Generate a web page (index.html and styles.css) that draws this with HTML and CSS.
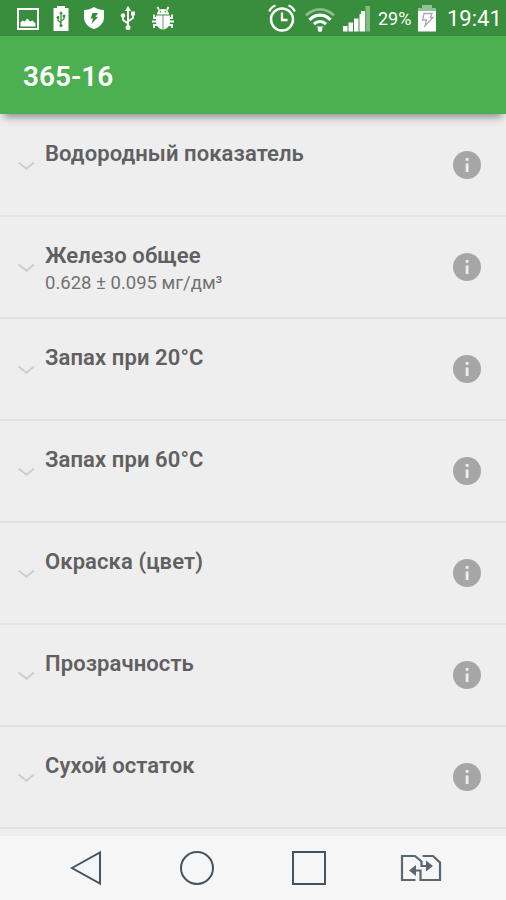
FILE: index.html
```html
<!DOCTYPE html>
<html lang="ru">
<head>
<meta charset="utf-8">
<title>365-16</title>
<link rel="stylesheet" href="styles.css">
</head>
<body>
<svg class="defs" aria-hidden="true">
  <symbol id="chevron" viewBox="0 0 18 10"><path d="M1.500 1.500 9.500 7.800 17 1.500" fill="none" stroke="#cccccc" stroke-width="1.800"/></symbol>
  <symbol id="info" viewBox="0 0 28 28"><circle cx="14" cy="14" r="14" fill="#a6a6a6"/><path d="M12.700 7h2.800v2.800h-2.800zM12.700 12.500h2.800v8.600h-2.800z" fill="#eee"/></symbol>
</svg>
<div class="screen">
  <div class="status">
    <div class="status-left">
      <svg width="24" height="24" viewBox="0 0 24 24"><path d="M2 3h20v20H2z" fill="none" stroke="#fff" stroke-width="2"/><path d="M4.500 20.500v-4l2-2 2 1 3-3 2.500 3 2.500-1 3 3v3z" fill="#fff"/></svg>
      <svg width="16" height="26" viewBox="0 0 16 26"><path d="M4 1h8v2h3.500v23H.5V3H4z" fill="#fff"/><path d="M8 21V8M8 18l-3-2.500v-3M8 16l3-2v-3" fill="none" stroke="#388e3c" stroke-width="1.300"/><path d="M8 6l1.800 3H6.200zM9.700 9.800h2.600v2.400H9.700z" fill="#388e3c"/><circle cx="5" cy="12.500" r="1.400" fill="#388e3c"/><circle cx="8" cy="20.500" r="1.600" fill="#388e3c"/></svg>
      <svg width="22" height="24" viewBox="0 0 22 24"><path d="M11 1C8 3 4.500 4 1 4v7c0 6 4 10 10 12 6-2 10-6 10-12V4c-3.500 0-7-1-10-3z" fill="#fff"/><path d="M9.500 7h5.500l-2.500 4h2.500l-6.500 7 1.500-5.500H7.500z" fill="#388e3c"/></svg>
      <svg width="16" height="26" viewBox="0 0 16 26"><path d="M8 22V4M8 18.500l-5-3.500v-4M8 16.500l5-3.500V9" fill="none" stroke="#fff" stroke-width="1.800"/><path d="M8 1l3 5H5zM11 6.500h4v4h-4z" fill="#fff"/><circle cx="3" cy="10.500" r="2.200" fill="#fff"/><circle cx="8" cy="22.500" r="2.500" fill="#fff"/></svg>
      <svg width="24" height="26" viewBox="0 0 24 26"><path d="M6 9.500c0-7.500 12-7.500 12 0z" fill="#fff"/><path d="M8 5 6.500 2M16 5l1.500-3M6 13H3V9.500M18 13h3V9.500M6 16.500H1M18 16.500h5M6 20H3v3M18 20h3v3" fill="none" stroke="#fff" stroke-width="1.800"/><path d="M5 10.500h6.600v14C7.500 24 5 20.500 5 16.500zM12.400 10.500H19v6c0 4-2.500 7.500-6.600 8z" fill="#fff"/><circle cx="9.500" cy="6.800" r=".8" fill="#388e3c"/><circle cx="14.500" cy="6.800" r=".8" fill="#388e3c"/></svg>
    </div>
    <div class="status-right">
      <svg class="alarm" width="28" height="28" viewBox="0 0 28 28"><circle cx="14" cy="15.500" r="11" fill="none" stroke="#fff" stroke-width="2.500"/><path d="M14 8.500v7.500h5.500M1.200 7.500C2.500 4.500 4.500 2.500 7.500 1.500M26.800 7.500C25.500 4.500 23.500 2.500 20.500 1.500" fill="none" stroke="#fff" stroke-width="2.300"/></svg>
      <svg class="wifi" width="30" height="26" viewBox="0 0 30 26"><path d="M1 8.500C9 .3 21 .3 29 8.500" fill="none" stroke="#8cbf8f" stroke-width="2.800"/><path d="M4.500 12.800c6-6.300 15-6.300 21 0M9 17.200c3.500-3.600 8.500-3.600 12 0" fill="none" stroke="#fff" stroke-width="3.200"/><path d="M11.500 19.500h7L15 23z" fill="#fff"/><circle cx="15" cy="22.500" r="2.400" fill="#fff"/></svg>
      <svg class="signal" width="28" height="27" viewBox="0 0 28 27"><path d="M0 21h4.500v5.500H0zM5.500 17.500H10v9H5.500zM11 13.500h4.500v13H11zM16.500 9H21v17.500h-4.500z" fill="#fff"/><path d="M18 6h4v20.500h-1V9h-3z" fill="#fff"/><path d="M22.500 1H27v25.500h-4.500z" fill="#83b985"/></svg>
      <span class="percent">29%</span>
      <svg class="battery" width="18" height="28" viewBox="0 0 18 28"><path d="M4 1h10v3h4v6H0V4h4z" fill="#91c294"/><path d="M0 7h18v20.500H0z" fill="#fff"/><path d="M6 9.500h8l-1.500 4h2.500l-8 8.500 1.500-6H4.500z" fill="none" stroke="#aaa" stroke-width="1.300"/></svg>
      <span class="clock">19:41</span>
    </div>
  </div>
  <header class="appbar"><h1>365-16</h1></header>
  <main class="list">
    <div class="row"><svg class="chevron"><use href="#chevron"/></svg><div class="text"><h2>Водородный показатель</h2></div><svg class="info"><use href="#info"/></svg></div>
    <div class="row"><svg class="chevron"><use href="#chevron"/></svg><div class="text"><h2>Железо общее</h2><p>0.628 ± 0.095 мг/дм³</p></div><svg class="info"><use href="#info"/></svg></div>
    <div class="row"><svg class="chevron"><use href="#chevron"/></svg><div class="text"><h2>Запах при 20°C</h2></div><svg class="info"><use href="#info"/></svg></div>
    <div class="row"><svg class="chevron"><use href="#chevron"/></svg><div class="text"><h2>Запах при 60°C</h2></div><svg class="info"><use href="#info"/></svg></div>
    <div class="row"><svg class="chevron"><use href="#chevron"/></svg><div class="text"><h2>Окраска (цвет)</h2></div><svg class="info"><use href="#info"/></svg></div>
    <div class="row"><svg class="chevron"><use href="#chevron"/></svg><div class="text"><h2>Прозрачность</h2></div><svg class="info"><use href="#info"/></svg></div>
    <div class="row"><svg class="chevron"><use href="#chevron"/></svg><div class="text"><h2>Сухой остаток</h2></div><svg class="info"><use href="#info"/></svg></div>
  </main>
  <nav class="navbar">
    <svg width="34" height="36" viewBox="0 0 34 36"><path d="M3 18 31 2.500v31z" fill="none" stroke="#46545e" stroke-width="2"/></svg>
    <svg width="36" height="36" viewBox="0 0 36 36"><circle cx="18" cy="18" r="16" fill="none" stroke="#46545e" stroke-width="2"/></svg>
    <svg width="36" height="36" viewBox="0 0 36 36"><path d="M2 2h32v32H2z" fill="none" stroke="#46545e" stroke-width="2"/></svg>
    <svg width="42" height="28" viewBox="0 0 42 28"><g fill="none" stroke="#5b666e" stroke-width="2.200"><path d="M15.500 26H2V2h13l6.500 5.500V12h8M22.500 2H33l7 6.500V26H20.500v-9.500h-8"/></g><path d="M26 6.500l7 5.500-7 5.500zM16 11l-7 5.500 7 5.500z" fill="#5b666e"/></svg>
  </nav>
</div>
</body>
</html>
```
FILE: styles.css
```css
* { box-sizing: border-box; }
body { margin: 0; font-family: Roboto, "Noto Sans", sans-serif; background: #eee; }
h1, h2, p { margin: 0; }
svg { display: block; flex: none; }
.defs { display: none; }
.screen { width: 506px; height: 900px; display: flex; flex-direction: column; overflow: hidden; }

.status { height: 36px; flex: none; background: #388e3c; color: #fff; display: flex; justify-content: space-between; padding: 0 4px 0 16px; }
.status-left, .status-right { display: flex; align-items: center; }
.status-left { gap: 12px; padding-bottom: 1px; }
.status-left svg:nth-child(2) { margin-left: 1px; }
.status-left svg:nth-child(3) { margin-left: 2px; }
.status-left svg:nth-child(4) { margin-left: 3px; }
.status-left svg:nth-child(5) { margin-left: 3px; }
.wifi { margin-left: 9px; margin-top: 3px; }
.signal { margin-left: 8px; }
.percent { margin-left: 7px; width: 36px; font-size: 18px; }
.battery { margin-left: 4px; }
.clock { margin-left: 11px; width: 55px; font-size: 22px; white-space: nowrap; }

.appbar { height: 78px; flex: none; background: #4caf50; display: flex; align-items: center; padding: 4px 0 0 23px; z-index: 1; box-shadow: 0 7px 8px -4px rgba(0, 0, 0, .42); }
.appbar h1 { color: #fff; font-size: 28px; font-weight: 600; line-height: 34px; }

.list { flex: 1; min-height: 0; padding-top: 1px; }
.row { height: 102px; border-bottom: 2px solid #e2e2e2; display: flex; align-items: flex-start; padding: 0 25px 0 17px; color: #606060; }
.chevron { width: 18px; height: 10px; margin-top: 46px; }
.text { flex: 1; margin: 25px 0 0 10px; }
.text h2 { font-size: 22px; line-height: 28px; font-weight: 600; letter-spacing: .1px; }
.text p { font-size: 18.5px; line-height: 26px; color: #727272; }
.info { width: 28px; height: 28px; margin-top: 36px; }

.navbar { height: 64px; flex: none; background: #f6f6f6; display: flex; align-items: center; padding-left: 69px; }
.navbar svg:nth-child(2) { margin-left: 76px; }
.navbar svg:nth-child(3) { margin-left: 76px; }
.navbar svg:nth-child(4) { margin-left: 73px; }
```
